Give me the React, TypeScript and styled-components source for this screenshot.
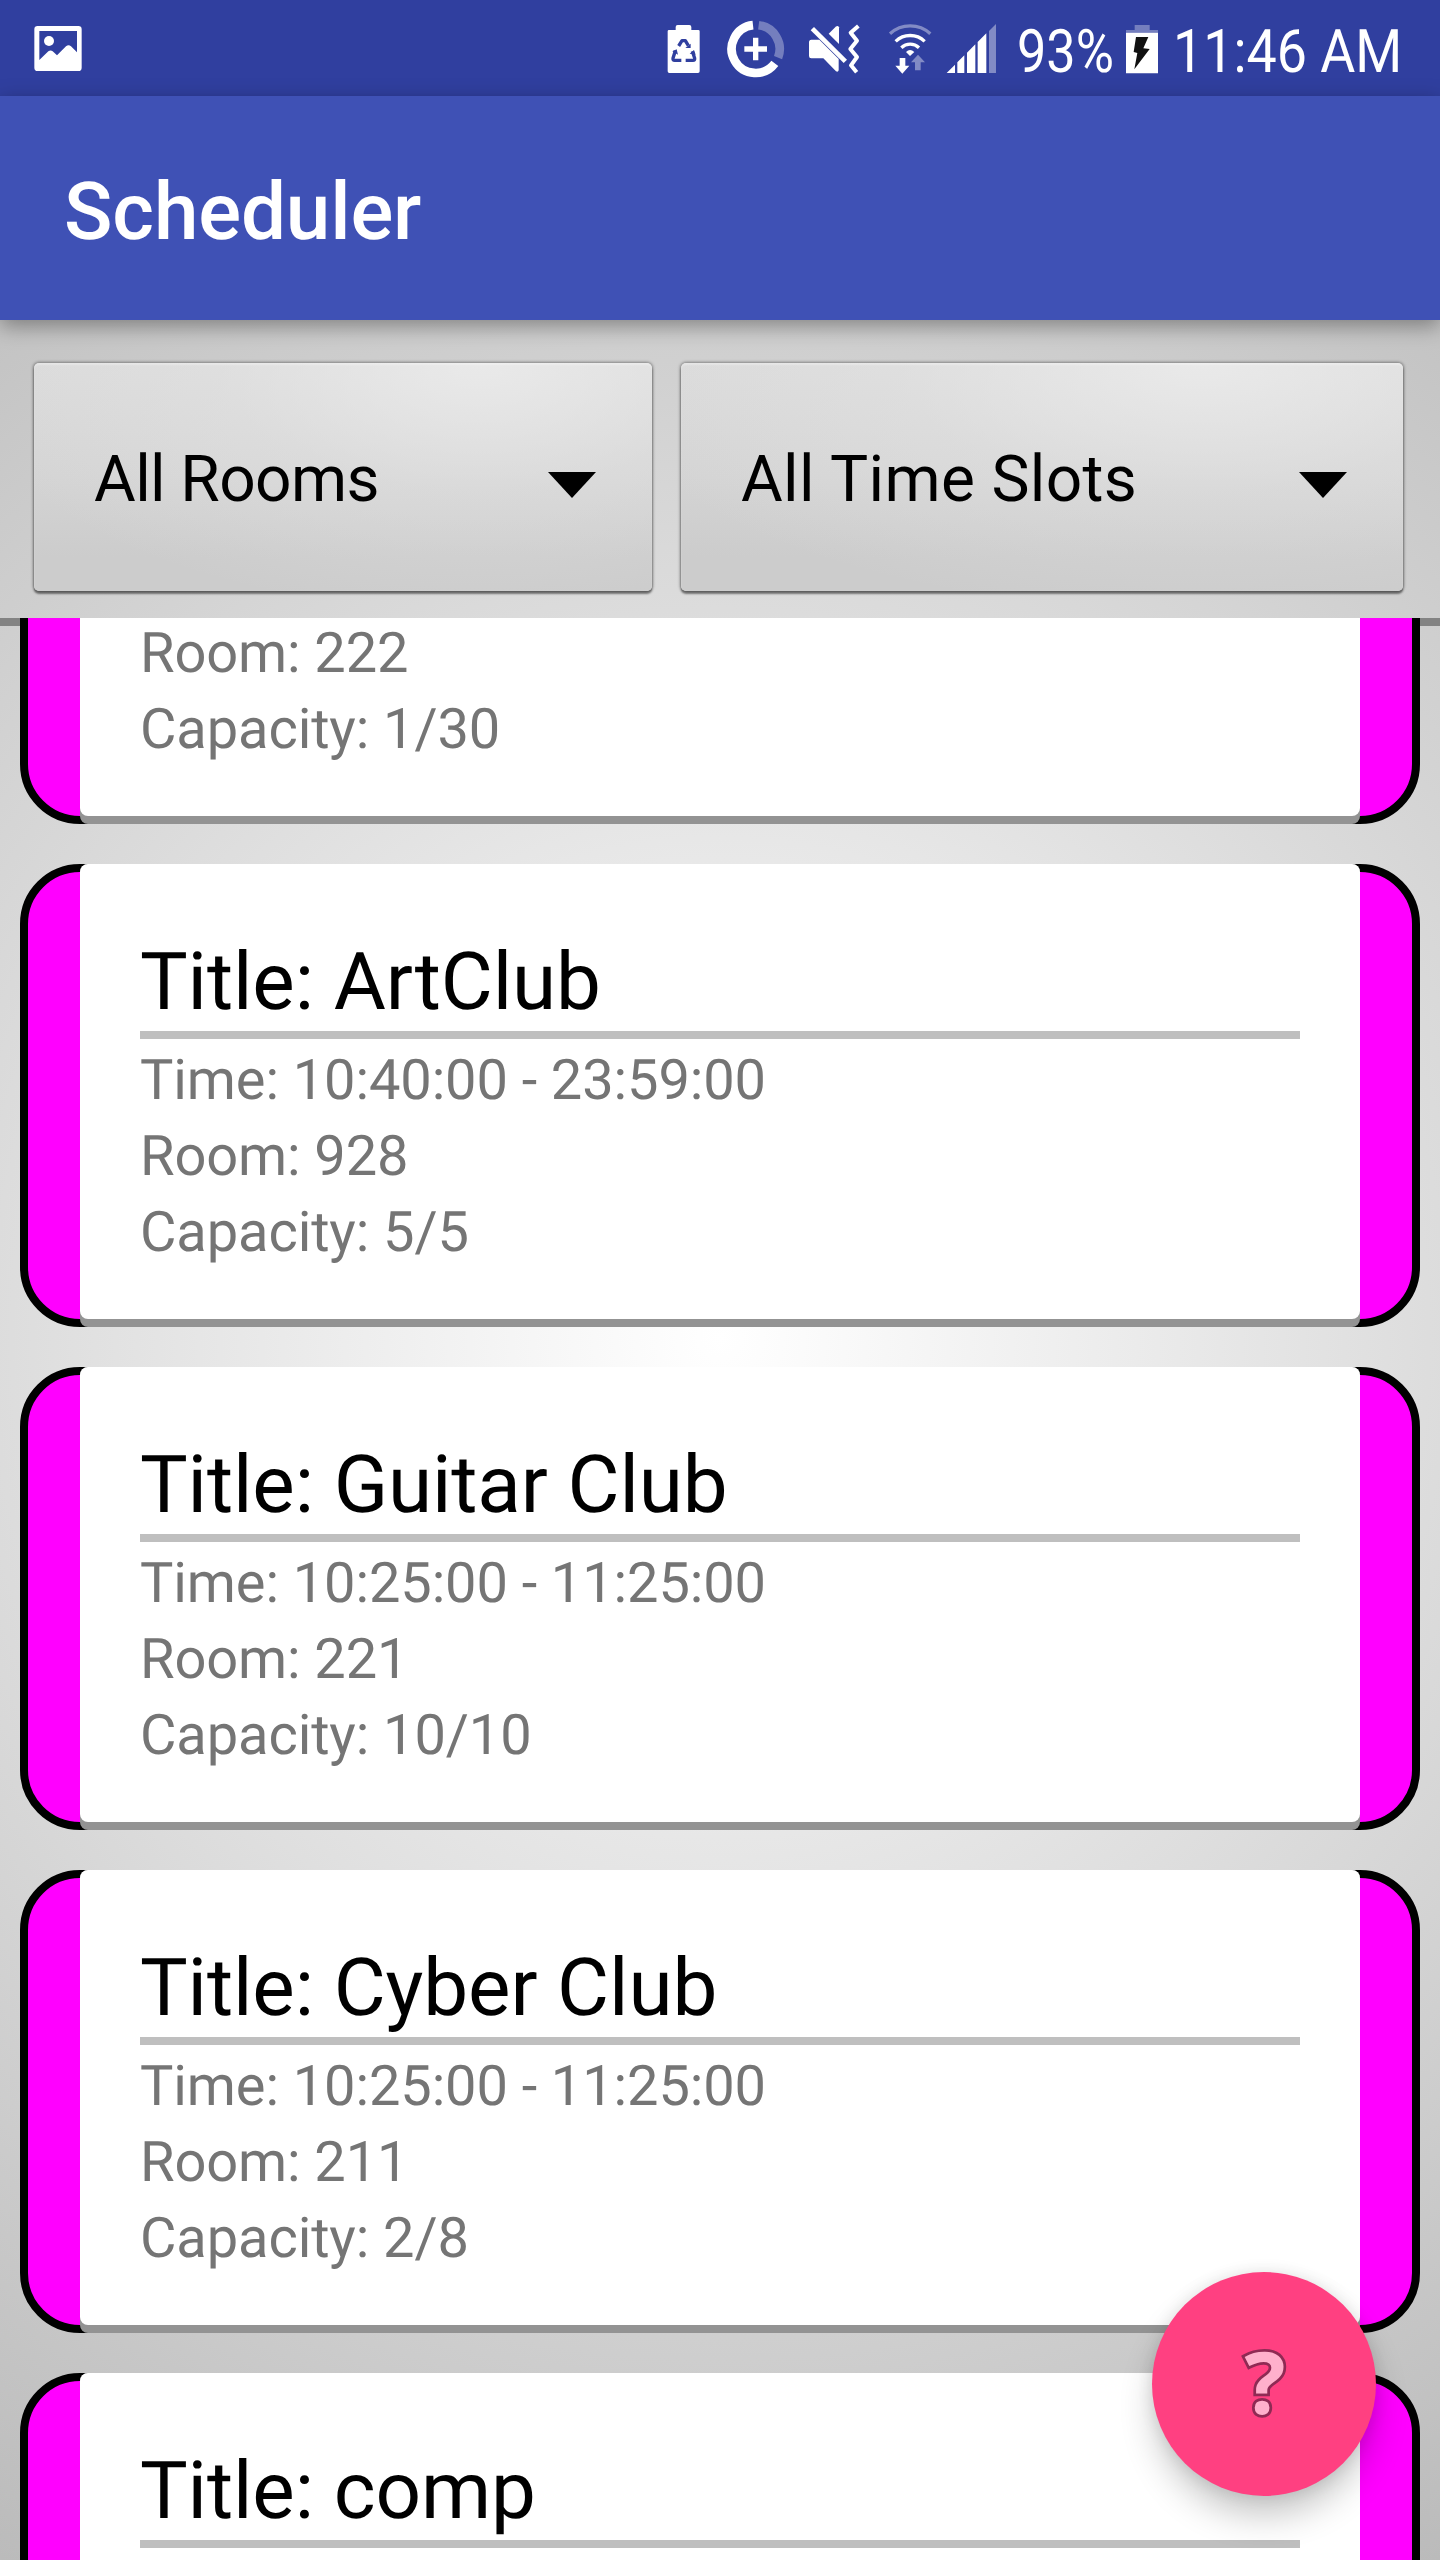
import React from "react";
import styled, { createGlobalStyle } from "styled-components";

const GlobalStyle = createGlobalStyle`
  html, body { margin: 0; padding: 0; overflow: hidden; }
  * { box-sizing: border-box; }
`;

const Screen = styled.div`
  width: 1440px;
  height: 2560px;
  position: relative;
  overflow: hidden;
  display: flex;
  flex-direction: column;
  font-family: Roboto, "Noto Sans", sans-serif;
  text-rendering: geometricPrecision;
  background: radial-gradient(circle 1500px at 720px 1338px, #ffffff 0%, #b7b7b7 100%);
`;

const StatusBar = styled.header`
  height: 96px;
  flex: none;
  background: #303f9f;
  display: flex;
  align-items: center;
  justify-content: space-between;
  padding: 0 42px 0 30px;
  color: #fff;
`;

const StatusGroup = styled.div`
  display: flex;
  align-items: center;
  height: 96px;
`;

const Glyph = styled.svg`
  display: block;
  flex: none;
  height: 96px;
`;

const StatusText = styled.div<{ $width: number; $indent: number }>`
  width: ${(p) => p.$width}px;
  padding-left: ${(p) => p.$indent}px;
  flex: none;
  font-size: 60px;
  line-height: 70px;
  padding-top: 7px;
  white-space: nowrap;
`;

const Condensed = styled.span<{ $ratio: number }>`
  display: inline-block;
  transform: scaleX(${(p) => p.$ratio});
  transform-origin: left center;
`;

const AppBar = styled.div`
  height: 224px;
  flex: none;
  background: #3f51b5;
  display: flex;
  align-items: center;
  padding: 0 64px;
  box-shadow: 0 6px 20px rgba(0, 0, 0, 0.36);
  z-index: 1;
`;

const AppTitle = styled.h1`
  margin: 0;
  padding-top: 8px;
  font-size: 80px;
  line-height: 94px;
  font-weight: 500;
  letter-spacing: -0.15px;
  color: #fff;
`;

const Filters = styled.div`
  height: 298px;
  flex: none;
  display: flex;
  gap: 29px;
  padding: 43px 35px 26px 34px;
`;

const Spinner = styled.button<{ $width: number; $tracking: number }>`
  width: ${(p) => p.$width}px;
  height: 228px;
  flex: none;
  border: 0;
  border-radius: 5px;
  padding: 6px 56px 0 60px;
  display: flex;
  align-items: center;
  justify-content: space-between;
  font-family: inherit;
  font-size: 64px;
  line-height: 76px;
  letter-spacing: ${(p) => p.$tracking}px;
  color: #000;
  text-align: left;
  background:
    radial-gradient(ellipse 85% 110% at 72% 0%, rgba(236, 236, 236, 0.85), rgba(230, 230, 230, 0.35) 50%, rgba(220, 220, 220, 0) 100%),
    linear-gradient(#dbdbdb 0%, #d4d4d4 50%, #cccccc 85%, #cccccc 100%);
  box-shadow:
    inset 0 2px 2px rgba(255, 255, 255, 0.3),
    0 0 3px 1px rgba(0, 0, 0, 0.38),
    0 3px 2px rgba(0, 0, 0, 0.42);
`;

const Arrow = styled.svg`
  display: block;
  width: 48px;
  height: 26px;
  margin-top: 9px;
`;

const List = styled.main`
  flex: 1;
  min-height: 0;
  overflow: hidden;
  background: linear-gradient(#838383, #838383) 0 0 / 100% 8px no-repeat;
`;

const Cards = styled.div`
  display: flex;
  flex-direction: column;
  gap: 40px;
  padding: 0 20px;
  margin-top: -257px;
`;

const CardFrame = styled.article`
  height: 463px;
  flex: none;
  display: flex;
  border: 8px solid #000;
  border-radius: 60px;
  background: #ff00ff;
`;

const CardShadow = styled.div`
  flex: 1;
  margin: -8px 52px;
  border-radius: 8px;
  background: #939393;
  padding-bottom: 8px;
`;

const CardBody = styled.div`
  height: 455px;
  border-radius: 8px;
  background: #fff;
  padding: 71px 60px 49px;
  display: flex;
  flex-direction: column;
`;

const CardTitle = styled.h2`
  margin: 0;
  padding-bottom: 2px;
  border-bottom: 8px solid #bfbfbf;
  font-size: 80px;
  line-height: 94px;
  font-weight: 400;
  letter-spacing: -0.12px;
  color: #000;
`;

const Details = styled.div`
  margin-top: auto;
`;

const Detail = styled.p`
  margin: 0;
  font-size: 56px;
  line-height: 76px;
  letter-spacing: -0.1px;
  color: #757575;
`;

const Fab = styled.button`
  position: absolute;
  right: 64px;
  bottom: 64px;
  width: 224px;
  height: 224px;
  border: 0;
  border-radius: 50%;
  background: #ff4081;
  display: flex;
  align-items: center;
  justify-content: center;
  box-shadow: 0 22px 36px -4px rgba(0, 0, 0, 0.24), 0 0 16px rgba(0, 0, 0, 0.1);
`;

const HelpMark = styled.span`
  padding: 0 0 6px 2px;
  font-family: "Open Sans", "Noto Sans", sans-serif;
  font-size: 86px;
  line-height: 100px;
  font-weight: 700;
  color: #ffb0cc;
  -webkit-text-stroke: 5.5px #8f2a54;
  paint-order: stroke fill;
`;

const PictureIcon = () => (
  <Glyph width={60} viewBox="90 0 180 288">
    <path
      fill="#fff"
      fillRule="evenodd"
      d="M113 78H235Q245 78 245 88V203Q245 213 235 213H113Q103 213 103 203V88Q103 78 113 78ZM118 93V180L145 154Q152 149 158 154L171 166L198 139Q206 132 213 139L231 157V93Z"
    />
    <circle cx={147} cy={123} r={15} fill="#fff" />
  </Glyph>
);

const PowerSaveIcon = () => (
  <Glyph width={50} viewBox="70 0 150 288">
    <path fill="#fff" d="M105 90V81Q105 75 111 75H146Q152 75 152 81V90H173Q177 90 177 94V214Q177 219 172 219H86Q81 219 81 214V94Q81 90 85 90Z" />
    <g fill="none" stroke="#303f9f" strokeWidth={10} strokeLinejoin="round">
      <path d="M114 138L124 122H134L143 137" />
      <path d="M104 152L97 175Q96 181 102 181H122" />
      <path d="M155 154L162 175Q163 181 157 181H135" />
    </g>
    <path fill="#303f9f" d="M150 131V144H134ZM95 154L108 148L112 164ZM147 161L160 150L165 164Z" />
  </Glyph>
);

const DataSaverIcon = () => (
  <Glyph width={84} viewBox="220 0 252 288" fill="none" strokeWidth={26}>
    <path stroke="#fff" d="M337 75.4A72 72 0 1 0 402.5 190.3" />
    <path stroke="#fff" strokeOpacity={0.33} d="M354 75.6A72 72 0 0 1 412.2 172.8" />
    <path fill="#fff" stroke="none" d="M337 113H353V139H379V155H353V181H337V155H311V139H337Z" />
  </Glyph>
);

const MuteIcon = () => (
  <Glyph width={76} viewBox="472 0 228 288" fill="#fff">
    <path d="M512 119H536L594 177V211Q592 218 586 214L548 175H512Q505 175 505 168V127Q505 119 512 119Z" />
    <path d="M564 101L585 80Q592 75 595 82V132Z" />
    <path d="M515 86L614 184" stroke="#fff" strokeWidth={14} />
    <path d="M653 78L630 98L649 122L629 147L649 171L631 196L648 217" fill="none" stroke="#fff" strokeWidth={12} strokeLinejoin="round" />
  </Glyph>
);

const WifiIcon = () => (
  <Glyph width={197 / 3} viewBox="700 0 197 288" fill="none" stroke="#fff" strokeWidth={10}>
    <path strokeOpacity={0.4} d="M748 101A90 90 0 0 1 869 101" />
    <path d="M765 124A63 63 0 0 1 852 124" />
    <path d="M782 143A39 39 0 0 1 835 143" />
    <path fill="#fff" stroke="none" d="M796 156Q808 144 821 156L808 168Z" />
    <path fill="#fff" stroke="none" d="M777 174H794V197H806L785 221L764 197H777Z" />
    <path fill="#fff" fillOpacity={0.4} stroke="none" d="M832 164L853 187H840V211H823V187H811Z" />
  </Glyph>
);

const SignalIcon = () => (
  <Glyph width={203 / 3} viewBox="897 0 203 288" fill="#fff">
    <path d="M920 219L945 194V219ZM952 219V187L973 166V219ZM981 219V158L1006 133V219ZM1013 219V126L1039 100V219Z" />
    <path fillOpacity={0.4} d="M1047 219V93L1068 72V219Z" />
  </Glyph>
);

const BatteryIcon = () => (
  <Glyph width={32} viewBox="378 0 96 288">
    <path fill="#fff" fillOpacity={0.33} d="M404 75H449V90H474V98H378V90H404Z" />
    <path fill="#fff" d="M378 98H474V220H378Z" />
    <path fill="#111" d="M408 111H445L430 145L449 147L403 208L412 159L401 156Z" />
  </Glyph>
);

const filters = [
  { label: "All Rooms", width: 618, tracking: -0.6 },
  { label: "All Time Slots", width: 722, tracking: 0.36 },
];

interface Session {
  title?: string;
  details?: string[];
}

const sessions: Session[] = [
  { details: ["Room: 222", "Capacity: 1/30"] },
  { title: "ArtClub", details: ["Time: 10:40:00 - 23:59:00", "Room: 928", "Capacity: 5/5"] },
  { title: "Guitar Club", details: ["Time: 10:25:00 - 11:25:00", "Room: 221", "Capacity: 10/10"] },
  { title: "Cyber Club", details: ["Time: 10:25:00 - 11:25:00", "Room: 211", "Capacity: 2/8"] },
  { title: "comp" },
];

export default function App() {
  return (
    <>
      <GlobalStyle />
      <Screen>
        <StatusBar>
          <StatusGroup>
            <PictureIcon />
          </StatusGroup>
          <StatusGroup>
            <PowerSaveIcon />
            <DataSaverIcon />
            <MuteIcon />
            <WifiIcon />
            <SignalIcon />
            <StatusText $width={119} $indent={10}>
              <Condensed $ratio={0.87}>93%</Condensed>
            </StatusText>
            <BatteryIcon />
            <StatusText $width={240} $indent={15}>
              <Condensed $ratio={0.896}>11:46 AM</Condensed>
            </StatusText>
          </StatusGroup>
        </StatusBar>
        <AppBar>
          <AppTitle>Scheduler</AppTitle>
        </AppBar>
        <Filters>
          {filters.map((f) => (
            <Spinner key={f.label} $width={f.width} $tracking={f.tracking}>
              {f.label}
              <Arrow viewBox="0 0 48 26">
                <path d="M0 0H48L24 26Z" />
              </Arrow>
            </Spinner>
          ))}
        </Filters>
        <List>
          <Cards>
            {sessions.map((s, i) => (
              <CardFrame key={i}>
                <CardShadow>
                  <CardBody>
                    {s.title && <CardTitle>Title: {s.title}</CardTitle>}
                    {s.details && (
                      <Details>
                        {s.details.map((d) => (
                          <Detail key={d}>{d}</Detail>
                        ))}
                      </Details>
                    )}
                  </CardBody>
                </CardShadow>
              </CardFrame>
            ))}
          </Cards>
        </List>
        <Fab aria-label="Help">
          <HelpMark>?</HelpMark>
        </Fab>
      </Screen>
    </>
  );
}
